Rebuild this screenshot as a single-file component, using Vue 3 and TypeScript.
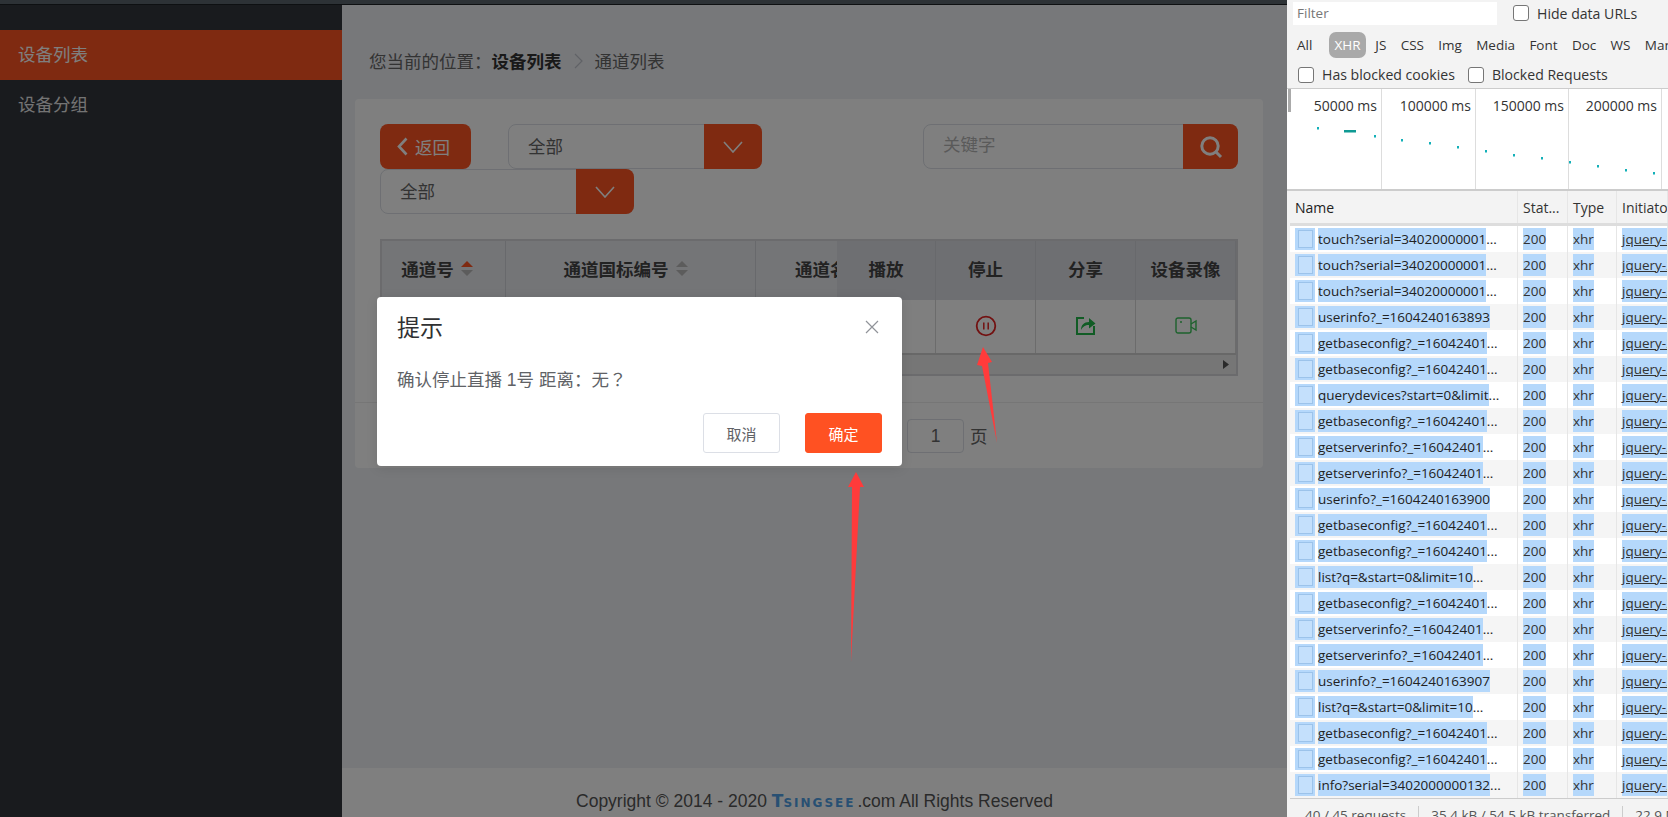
<script setup lang="ts">
const filters = ['JS', 'CSS', 'Img', 'Media', 'Font', 'Doc', 'WS', 'Manifest']

const ticks = [
  { label: '50000 ms', width: 92 },
  { label: '100000 ms', width: 94 },
  { label: '150000 ms', width: 93 },
  { label: '200000 ms', width: 93 },
]

// x, y of the request marks in the overview, relative to its left/top edge
const marks = [
  [27, 38], [84, 46], [111, 50], [139, 53], [167, 57], [195, 61], [223, 65],
  [251, 68], [279, 72], [307, 76], [335, 80], [363, 83],
]

const touch = { name: 'touch?serial=34020000001', more: true }
const base = { name: 'getbaseconfig?_=16042401', more: true }
const server = { name: 'getserverinfo?_=16042401', more: true }
const list = { name: 'list?q=&start=0&limit=10', more: true }

const requests = [
  touch, touch, touch,
  { name: 'userinfo?_=1604240163893', more: false },
  base, base,
  { name: 'querydevices?start=0&limit', more: true },
  base, server, server,
  { name: 'userinfo?_=1604240163900', more: false },
  base, base, list, base, server, server,
  { name: 'userinfo?_=1604240163907', more: false },
  list, base, base,
  { name: 'info?serial=3402000000132', more: true },
]
</script>

<template>
  <div class="screen">
    <div class="page">
      <div class="tabstrip"></div>
      <div class="page-body">
        <aside class="sidebar">
          <a class="nav-item active">设备列表</a>
          <a class="nav-item">设备分组</a>
        </aside>

        <div class="main">
          <div class="breadcrumb">
            <span>您当前的位置：</span>
            <b>设备列表</b>
            <svg class="crumb-sep" width="9" height="16" viewBox="0 0 9 16"><path d="M1 1l7 7-7 7" fill="none" stroke="#c0c4cc" stroke-width="1.2" /></svg>
            <span>通道列表</span>
          </div>

          <section class="card">
            <div class="toolbar">
              <button class="back-btn">
                <svg width="11" height="19" viewBox="0 0 11 19"><path d="M9.5 1.5L2 9.5l7.5 8" fill="none" stroke="#fff" stroke-width="2.6" /></svg>
                返回
              </button>
              <div class="select">
                <span class="select-value">全部</span>
                <span class="select-btn">
                  <svg width="20" height="12" viewBox="0 0 20 12"><path d="M1 1l9 10 9-10" fill="none" stroke="#fff" stroke-width="1.6" /></svg>
                </span>
              </div>
              <div class="search">
                <span class="search-input">关键字</span>
                <span class="select-btn search-btn">
                  <svg width="24" height="24" viewBox="0 0 24 24"><circle cx="11" cy="11" r="8.2" fill="none" stroke="#fff" stroke-width="3" /><path d="M17 17l5 5" stroke="#fff" stroke-width="3" /></svg>
                </span>
              </div>
            </div>
            <div class="toolbar">
              <div class="select">
                <span class="select-value">全部</span>
                <span class="select-btn">
                  <svg width="20" height="12" viewBox="0 0 20 12"><path d="M1 1l9 10 9-10" fill="none" stroke="#fff" stroke-width="1.6" /></svg>
                </span>
              </div>
            </div>

            <div class="table">
              <div class="t-head">
                <div class="th col-no">
                  通道号
                  <span class="sort"><i class="up on"></i><i class="down"></i></span>
                </div>
                <div class="th col-code">
                  通道国标编号
                  <span class="sort"><i class="up"></i><i class="down"></i></span>
                </div>
                <div class="th col-name">通道名称</div>
              </div>
              <div class="t-row"></div>
              <div class="t-scroll">
                <svg width="6" height="9" viewBox="0 0 6 9"><path d="M0 0l6 4.500-6 4.500z" fill="#555" /></svg>
              </div>

              <div class="t-fixed">
                <div class="fixed-head">
                  <div class="th">播放</div>
                  <div class="th">停止</div>
                  <div class="th">分享</div>
                  <div class="th">设备录像</div>
                </div>
                <div class="fixed-row">
                  <div class="td"></div>
                  <div class="td">
                    <svg width="22" height="22" viewBox="0 0 22 22">
                      <circle cx="11" cy="11" r="9.300" fill="none" stroke="#e52222" stroke-width="1.800" />
                      <path d="M8.800 7.500v7M13.200 7.500v7" stroke="#e52222" stroke-width="1.500" />
                    </svg>
                  </div>
                  <div class="td">
                    <svg width="20" height="19" viewBox="0 0 20 19">
                      <path d="M8 2H1v16h17v-8" fill="none" stroke="#22b84a" stroke-width="2" />
                      <path d="M5 14c0-5 3-8 8-8V2l6.500 5.500L13 12.500V9c-4 0-6 1.500-8 5z" fill="#22b84a" />
                    </svg>
                  </div>
                  <div class="td">
                    <svg width="22" height="17" viewBox="0 0 22 17">
                      <rect x="1" y="1" width="15" height="15" rx="2" fill="none" stroke="#3bc45a" stroke-width="1.400" />
                      <path d="M16 7l5-3v9l-5-3" fill="none" stroke="#3bc45a" stroke-width="1.400" />
                      <circle cx="6" cy="5" r="1" fill="#3bc45a" />
                    </svg>
                  </div>
                </div>
              </div>
            </div>

            <div class="pager">
              <span class="pager-input">1</span>
              <span>页</span>
            </div>
          </section>

          <footer class="footer">
            Copyright © 2014 - 2020
            <span class="logo"><em>T</em>SINGSEE</span>.com All Rights Reserved
          </footer>
        </div>

        <div class="mask"></div>
      </div>

      <div class="dialog">
        <div class="dialog-head">
          <span class="dialog-title">提示</span>
          <svg width="14" height="14" viewBox="0 0 14 14"><path d="M1 1l12 12M13 1L1 13" stroke="#909399" stroke-width="1.200" /></svg>
        </div>
        <div class="dialog-msg">确认停止直播 1号 距离：无<span class="qmark">？</span></div>
        <div class="dialog-foot">
          <button class="dlg-btn">取消</button>
          <button class="dlg-btn primary">确定</button>
        </div>
      </div>

      <!-- annotations drawn on top of the screenshot -->
      <svg class="arrows" width="1287" height="817" viewBox="0 0 1287 817">
        <path d="M983 347L992 362L988 363L997 443L982 366L977 365z" fill="#ff3b3b" />
        <path d="M856 472L864 487L860 487L851 662L852 487L848 487z" fill="#ff3b3b" />
      </svg>
    </div>

    <div class="devtools">
      <div class="dt-row dt-filter">
        <span class="filter-input">Filter</span>
        <label class="check"><i></i>Hide data URLs</label>
      </div>
      <div class="dt-row dt-types">
        <span>All</span>
        <span class="type-sep"></span>
        <span class="pill">XHR</span>
        <span v-for="f in filters" :key="f">{{ f }}</span>
      </div>
      <div class="dt-row dt-blocked">
        <label class="check"><i></i>Has blocked cookies</label>
        <label class="check"><i></i>Blocked Requests</label>
      </div>

      <div class="overview">
        <span class="handle"></span>
        <div v-for="t in ticks" :key="t.label" class="tick" :style="{ width: t.width + 'px' }">{{ t.label }}</div>
        <svg class="marks" width="378" height="100" viewBox="0 0 378 100">
          <rect v-for="m in marks" :key="m[0]" :x="m[0]" :y="m[1]" width="2" height="2.500" fill="#13b0b8" />
          <rect x="54" y="41" width="12" height="2.500" fill="#0f9a94" />
        </svg>
      </div>

      <div class="net">
        <div class="net-row net-head">
          <div class="c-name">Name</div>
          <div class="c-status">Stat...</div>
          <div class="c-type">Type</div>
          <div class="c-init">Initiator</div>
        </div>
        <div v-for="(r, i) in requests" :key="i" class="net-row" :class="{ odd: i % 2 === 1 }">
          <div class="c-name">
            <span class="file-icon"><i></i></span>
            <span class="sel">{{ r.name }}</span><span v-if="r.more">...</span>
          </div>
          <div class="c-status"><span class="sel">200</span></div>
          <div class="c-type"><span class="sel">xhr</span></div>
          <div class="c-init"><span class="sel link">jquery-2.1.4.min.js</span></div>
        </div>
      </div>

      <div class="dt-status">
        <span>40 / 45 requests</span>
        <span>35.4 kB / 54.5 kB transferred</span>
        <span>22.9 MB</span>
      </div>
    </div>
  </div>
</template>

<style scoped>
.screen {
  display: flex;
  width: 1668px;
  height: 817px;
  overflow: hidden;
  font-family: "Liberation Sans", "Noto Sans CJK SC", sans-serif;
}

.page {
  position: relative;
  display: flex;
  flex-direction: column;
  width: 1287px;
  flex-shrink: 0;
}

.tabstrip {
  height: 4px;
  background: #2d3236;
  border-bottom: 1px solid #0e1012;
}

.page-body {
  position: relative;
  flex: 1;
  display: flex;
  min-height: 0;
}

.mask {
  position: absolute;
  inset: 0;
  background: rgba(0, 0, 0, 0.5);
}

.sidebar {
  width: 342px;
  flex-shrink: 0;
  padding-top: 25px;
  background: #32363c;
}

.nav-item {
  display: block;
  height: 50px;
  padding-left: 18px;
  line-height: 50px;
  font-size: 17.5px;
  color: #e8e8e8;
}

.nav-item.active {
  background: #ff5522;
  color: #fff;
}

.main {
  flex: 1;
  display: flex;
  flex-direction: column;
  min-width: 0;
  background: #eef0f5;
}

.breadcrumb {
  display: flex;
  align-items: center;
  height: 94px;
  padding: 17px 0 0 27px;
  box-sizing: border-box;
  font-size: 17.5px;
  color: #666;
}

.breadcrumb b {
  color: #333;
}

.crumb-sep {
  margin: 0 12px 0 12px;
}

.card {
  margin: 0 24px 0 13px;
  height: 369px;
  padding: 25px 25px 0;
  box-sizing: border-box;
  background: #fff;
  border-radius: 4px;
}

.toolbar {
  display: flex;
  height: 45px;
}

.back-btn {
  display: flex;
  align-items: center;
  gap: 7px;
  width: 91px;
  margin-right: 37px;
  padding: 0 0 0 17px;
  border: none;
  border-radius: 8px;
  background: #ff5522;
  color: #fff;
  font-family: inherit;
  font-size: 17.5px;
}

.select {
  display: flex;
  width: 254px;
  box-sizing: border-box;
  border: 1px solid #dcdfe6;
  border-radius: 8px;
}

.select-value {
  flex: 1;
  padding-left: 19px;
  line-height: 45px;
  font-size: 17.5px;
  color: #666;
}

.select-btn {
  display: flex;
  align-items: center;
  justify-content: center;
  width: 58px;
  margin: -1px;
  border-radius: 0 8px 8px 0;
  background: #ff5522;
}

.search {
  display: flex;
  width: 315px;
  margin-left: auto;
  box-sizing: border-box;
  border: 1px solid #dcdfe6;
  border-radius: 8px;
}

.search-input {
  flex: 1;
  padding-left: 19px;
  line-height: 41px;
  font-size: 17.5px;
  color: #b4b4b4;
}

.search-btn {
  width: 55px;
}

.table {
  position: relative;
  height: 137px;
  margin-top: 25px;
  box-sizing: border-box;
  border: 2px solid #d6d6da;
  overflow: hidden;
}

.t-head {
  display: flex;
  height: 59px;
  background: #e8eaef;
}

.th {
  display: flex;
  align-items: center;
  justify-content: center;
  gap: 7px;
  padding-bottom: 4px;
  font-size: 17.5px;
  font-weight: bold;
  color: #444;
  box-sizing: border-box;
  border-right: 1px solid #d0d2d8;
}

.col-no {
  width: 124px;
  flex-shrink: 0;
  padding-right: 13px;
}

.col-code {
  width: 250px;
  flex-shrink: 0;
  padding-right: 10px;
}

.col-name {
  width: 148px;
  flex-shrink: 0;
  border-right: none;
}

.sort {
  display: flex;
  flex-direction: column;
  gap: 3px;
}

.sort i {
  display: block;
  width: 0;
  height: 0;
  border-left: 6px solid transparent;
  border-right: 6px solid transparent;
}

.sort .up {
  border-bottom: 6px solid #b8b8b8;
}

.sort .up.on {
  border-bottom-color: #ff5522;
}

.sort .down {
  border-top: 6px solid #b8b8b8;
}

.t-row {
  height: 53px;
  background: #fff;
}

.t-scroll {
  display: flex;
  align-items: center;
  justify-content: flex-end;
  height: 21px;
  padding-right: 7px;
  border-top: 2px solid #d0d0d0;
  box-sizing: border-box;
  background: #ececec;
}

.t-fixed {
  position: absolute;
  top: 0;
  right: 0;
  width: 399px;
}

.fixed-head,
.fixed-row {
  display: grid;
  grid-template-columns: 99px repeat(3, 100px);
}

.fixed-head {
  height: 59px;
  background: #dcdee5;
}

.fixed-row {
  height: 53px;
  background: #fff;
}

.td {
  display: flex;
  align-items: center;
  justify-content: center;
  padding-bottom: 2px;
  box-sizing: border-box;
  border-right: 1px solid #d8d8d8;
}

.pager {
  display: flex;
  align-items: center;
  gap: 6px;
  height: 66px;
  margin: 26px -25px 0;
  padding-left: 552px;
  box-sizing: border-box;
  border-top: 1px solid #ececec;
  font-size: 17.5px;
  color: #666;
}

.pager-input {
  width: 57px;
  height: 34px;
  box-sizing: border-box;
  border: 1px solid #dcdfe6;
  border-radius: 4px;
  line-height: 32px;
  text-align: center;
}

.footer {
  margin-top: auto;
  height: 49px;
  box-sizing: border-box;
  padding-top: 22px;
  background: #fff;
  text-align: center;
  font-size: 17.5px;
  line-height: 22px;
  color: #555;
}

.logo {
  margin-right: 2px;
  font-family: "DejaVu Sans", sans-serif;
  font-weight: bold;
  font-size: 12px;
  letter-spacing: 2px;
  color: #50a0e6;
}

.logo em {
  font-size: 17px;
  font-style: normal;
  letter-spacing: 0;
}

.dialog {
  position: absolute;
  left: 377px;
  top: 297px;
  width: 525px;
  height: 169px;
  box-sizing: border-box;
  padding: 13px 20px 0;
  background: #fff;
  border-radius: 4px;
  box-shadow: 0 2px 12px rgba(0, 0, 0, 0.1);
}

.dialog-head {
  display: flex;
  align-items: center;
  justify-content: space-between;
  padding-right: 3px;
  height: 32px;
}

.dialog-head svg {
  margin-top: 2px;
}

.dialog-title {
  font-size: 23px;
  color: #303133;
}

.dialog-msg {
  margin-top: 25px;
  font-size: 17.5px;
  line-height: 24px;
  color: #606266;
}

.qmark {
  font-family: "Noto Sans CJK TC", sans-serif;
}

.dialog-foot {
  display: flex;
  justify-content: flex-end;
  gap: 25px;
  margin-top: 21px;
}

.dlg-btn {
  width: 77px;
  height: 40px;
  border: 1px solid #dcdfe6;
  border-radius: 3px;
  background: #fff;
  font-family: inherit;
  font-size: 15px;
  color: #606266;
}

.dlg-btn.primary {
  border-color: #ff5122;
  background: #ff5122;
  color: #fff;
}

.arrows {
  position: absolute;
  left: 0;
  top: 0;
  pointer-events: none;
}

.devtools {
  flex: 1;
  display: flex;
  flex-direction: column;
  min-width: 0;
  background: #f3f3f3;
  font-family: "Open Sans", "Noto Sans", sans-serif;
  font-size: 13.5px;
  color: #333;
}

.dt-row {
  display: flex;
  align-items: center;
  white-space: nowrap;
}

.dt-filter {
  height: 26px;
  padding-left: 6px;
}

.filter-input {
  width: 200px;
  height: 23px;
  padding-left: 4px;
  background: #fff;
  line-height: 23px;
  color: #777;
}

.check {
  display: flex;
  align-items: center;
  gap: 8px;
  font-size: 14.1px;
}

.check i {
  display: block;
  width: 14px;
  height: 14px;
  border: 1px solid #767676;
  border-radius: 3px;
  background: #fff;
}

.dt-filter .check {
  margin-left: 16px;
}

.dt-types {
  height: 33px;
  margin-top: 2px;
  gap: 14.3px;
  padding-left: 10px;
}

.type-sep {
  width: 1px;
  height: 20px;
  margin: 0 -8px 0 -4px;
  background: #ccc;
}

.pill {
  margin-right: -5px;
  padding: 4px 5.5px;
  border-radius: 7px;
  background: #a9a9a9;
  color: #fff;
}

.dt-blocked {
  height: 28px;
  gap: 13px;
  padding-left: 11px;
  border-bottom: 1px solid #ccc;
  box-sizing: border-box;
}

.overview {
  position: relative;
  display: flex;
  height: 100px;
  padding-left: 3px;
  background: #fff;
  border-bottom: 2px solid #ccc;
}

.handle {
  position: absolute;
  left: 1px;
  top: 0;
  width: 3px;
  height: 23px;
  background: #aaa;
}

.tick {
  flex-shrink: 0;
  box-sizing: border-box;
  padding: 7px 4px 0 0;
  border-right: 1px solid #ddd;
  font-size: 14px;
  text-align: right;
  white-space: nowrap;
}

.marks {
  position: absolute;
  left: 3px;
  top: 0;
}

.net {
  flex: 1;
  min-height: 0;
  margin-left: 3px;
  background: #fff;
  overflow: hidden;
}

.net-row {
  display: grid;
  grid-template-columns: 228px 50px 49px 1fr;
  height: 26px;
  align-items: center;
  white-space: nowrap;
}

.net-row.odd {
  background: #f5f5f5;
}

.net-head {
  height: 35px;
  box-sizing: border-box;
  background: #f3f3f3;
  border-bottom: 3px solid #ddd;
  font-size: 14px;
}

.net-row > div {
  display: flex;
  align-items: center;
  height: 100%;
  padding-left: 5px;
  border-right: 1px solid #e6e6e6;
  overflow: hidden;
  box-sizing: border-box;
}

.c-name {
  color: #222;
}

.sel {
  height: 22px;
  line-height: 22px;
  background: #b5d8fb;
}

.link {
  text-decoration: underline;
}

.file-icon {
  display: flex;
  align-items: center;
  justify-content: center;
  width: 20px;
  height: 22px;
  margin-right: 3px;
  background: #b5d8fb;
}

.file-icon i {
  display: block;
  width: 13px;
  height: 16px;
  border: 1px solid #9cc3ea;
  background: #c4e0fc;
}

.dt-status {
  display: flex;
  height: 19px;
  box-sizing: border-box;
  border-top: 1px solid #ccc;
  padding: 7px 0 0 15px;
  margin-left: 3px;
  line-height: 19px;
  white-space: nowrap;
  overflow: hidden;
  color: #555;
}

.dt-status span + span {
  margin-left: 12px;
  padding-left: 12px;
  border-left: 1px solid #ccc;
}
</style>

<style>
html,
body {
  margin: 0;
  overflow: hidden;
}
</style>
